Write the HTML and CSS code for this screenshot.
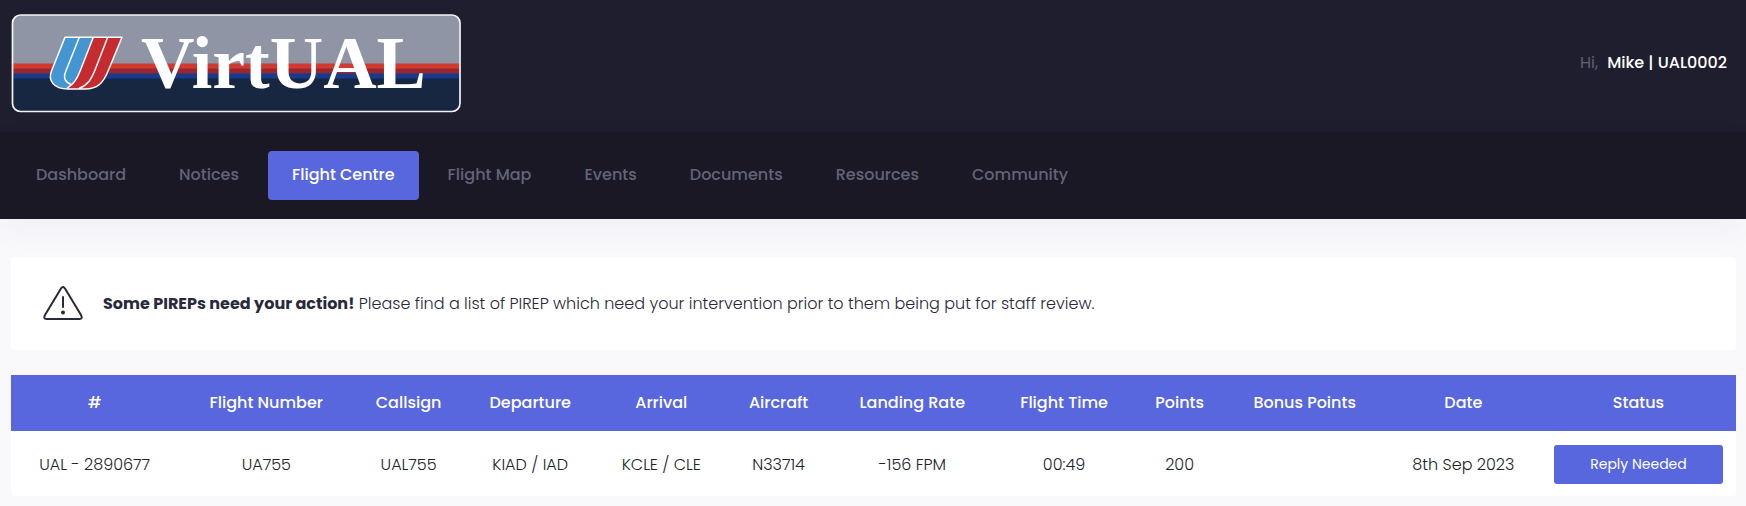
FILE: index.html
```html
<!DOCTYPE html>
<html lang="en">
<head>
<meta charset="utf-8">
<title>VirtUAL - Flight Centre</title>
<link rel="stylesheet" href="styles.css">
</head>
<body>
<header class="topbar">
  <a class="brand" href="#" aria-label="VirtUAL">
    <svg class="logo" viewBox="0 0 450 100" role="img" aria-label="VirtUAL">
      <defs><clipPath id="plate"><rect x="1.500" y="2" width="447" height="96.500" rx="8"/></clipPath></defs>
      <g clip-path="url(#plate)">
        <rect width="450" height="51" fill="#9095a5"/>
        <rect y="50.500" width="450" height="6" fill="#d03a30"/>
        <rect y="55.500" width="450" height="6" fill="#98282f"/>
        <rect y="60.500" width="450" height="6" fill="#163a8c"/>
        <rect y="65.500" width="450" height="34" fill="#182741"/>
      </g>
      <rect x="1.500" y="2" width="447.500" height="96.500" rx="8" fill="none" stroke="#f4f4f6" stroke-width="1.700"/>
      <path d="M54 24.300L40.500 58C38 66 41 75.300 56 75.300C63 71 67 66 69.500 57L82.300 24.300Z" fill="#4496d3"/>
      <path d="M82.300 24.300H111L97.500 57C92 71 86 76 74 76H56C63 71 67 66 69.500 57Z" fill="#c52b2f"/>
      <g fill="none" stroke="#fff" stroke-width="1.500" stroke-linejoin="round">
        <path d="M54 24.300H111L97.500 57C92 71 86 76 74 76H57C42 76 37 67 40.500 58Z"/>
        <path d="M68.300 24.300L54.500 59C52 65 54.500 70 60.500 71.500"/>
        <path d="M82.300 24.300L69.500 57C66 66 63 71 56 75.300"/>
        <path d="M96.700 24.300L84 57C80 67 77 71.500 68 75.500"/>
      </g>
      <text class="logo-text" x="130" y="75">VirtUAL</text>
    </svg>
  </a>
  <div class="user"><span class="hi">Hi,</span><span class="user-name">Mike | UAL0002</span></div>
</header>
<nav class="menu">
  <a class="menu-link" href="#">Dashboard</a>
  <a class="menu-link" href="#">Notices</a>
  <a class="menu-link active" href="#" aria-current="page">Flight Centre</a>
  <a class="menu-link" href="#">Flight Map</a>
  <a class="menu-link" href="#">Events</a>
  <a class="menu-link" href="#">Documents</a>
  <a class="menu-link" href="#">Resources</a>
  <a class="menu-link" href="#">Community</a>
</nav>
<main class="content">
  <div class="alert" role="alert">
    <svg class="alert-icon" viewBox="0 0 40 36" aria-hidden="true">
      <path d="M18 2.500Q20 -0.500 22 2.500L38 29Q40 33 36.500 33H3.500Q0 33 2 29Z" fill="none" stroke="#282a3c" stroke-width="2"/>
      <path d="M20 11V21" stroke="#282a3c" stroke-width="2" stroke-linecap="round"/>
      <circle cx="20" cy="26.500" r="2" fill="#282a3c"/>
    </svg>
    <p class="alert-text"><strong>Some PIREPs need your action!</strong> Please find a list of PIREP which need your intervention prior to them being put for staff review.</p>
  </div>
  <div class="card">
    <table class="pireps">
      <colgroup>
        <col class="c-id"><col class="c-number"><col class="c-callsign"><col class="c-departure"><col class="c-arrival"><col class="c-aircraft"><col class="c-rate"><col class="c-time"><col class="c-points"><col class="c-bonus"><col class="c-date"><col class="c-status">
      </colgroup>
      <thead>
        <tr><th>#</th><th>Flight Number</th><th>Callsign</th><th>Departure</th><th>Arrival</th><th>Aircraft</th><th>Landing Rate</th><th>Flight Time</th><th>Points</th><th>Bonus Points</th><th>Date</th><th>Status</th></tr>
      </thead>
      <tbody>
        <tr><td>UAL - 2890677</td><td>UA755</td><td>UAL755</td><td>KIAD / IAD</td><td>KCLE / CLE</td><td>N33714</td><td>-156 FPM</td><td>00:49</td><td>200</td><td></td><td>8th Sep 2023</td><td class="status"><button class="reply" type="button">Reply Needed</button></td></tr>
      </tbody>
    </table>
  </div>
</main>
</body>
</html>
```
FILE: styles.css
```css
* { box-sizing: border-box; }
body {
  margin: 0;
  background: #f9f9fc;
  color: #282a3c;
  font-family: Poppins, Inter, sans-serif;
  font-size: 16px;
  line-height: 24px;
}
.topbar {
  display: flex;
  align-items: center;
  justify-content: space-between;
  padding: 13px 19px 19px 11px;
  background: #1f1e2e;
}
.brand { display: flex; }
.logo { width: 450px; height: 100px; }
.logo-text {
  font-family: "Bodoni MT", "Liberation Serif", serif;
  font-size: 74px;
  font-weight: 700;
  fill: #fff;
}
.user { display: flex; gap: 9px; font-weight: 500; }
.hi { color: #5e6078; font-weight: 400; }
.user-name { color: #fff; }
.menu {
  display: flex;
  gap: 5px;
  padding: 19px 12px;
  background: #191824;
  box-shadow: 0 10px 30px rgba(82, 63, 105, .05);
}
.menu-link {
  padding: 12px 24px 13px;
  border-radius: 4px;
  color: #636479;
  font-weight: 500;
  text-decoration: none;
}
.menu-link.active { background: #5867dd; color: #fff; }
.content { padding: 38px 10px 10px 11px; }
.alert {
  display: flex;
  align-items: center;
  gap: 20px;
  min-height: 93px;
  margin-bottom: 25px;
  padding: 16px 32px;
  border-radius: 4px;
  background: #fff;
}
.alert-icon { flex: none; width: 40px; height: 36px; }
.alert-text { margin: 0; font-weight: 300; }
.alert-text strong { font-weight: 700; }
.card { overflow: hidden; border-radius: 0 0 4px 4px; background: #fff; }
.pireps { width: 100%; table-layout: fixed; border-collapse: collapse; text-align: center; }
.pireps th {
  padding: 16px 4px;
  background: #5867dd;
  color: #fff;
  font-weight: 500;
}
.pireps td { padding: 14px 4px 12px; color: #212529; font-weight: 300; }
.pireps .status { padding: 14px 13px 12px; }
.reply {
  display: block;
  width: 100%;
  padding: 8px;
  border: 0;
  border-radius: 3px;
  background: #5867dd;
  color: #fff;
  font: 400 14px/23px Poppins, Inter, sans-serif;
}
.c-id { width: 9.7%; }
.c-number { width: 10.2%; }
.c-callsign { width: 6.3%; }
.c-departure { width: 7.8%; }
.c-arrival { width: 7.4%; }
.c-aircraft { width: 6.2%; }
.c-rate { width: 9.3%; }
.c-time { width: 8.3%; }
.c-points { width: 5.1%; }
.c-bonus { width: 9.4%; }
.c-date { width: 9%; }
.c-status { width: 11.3%; }
```
